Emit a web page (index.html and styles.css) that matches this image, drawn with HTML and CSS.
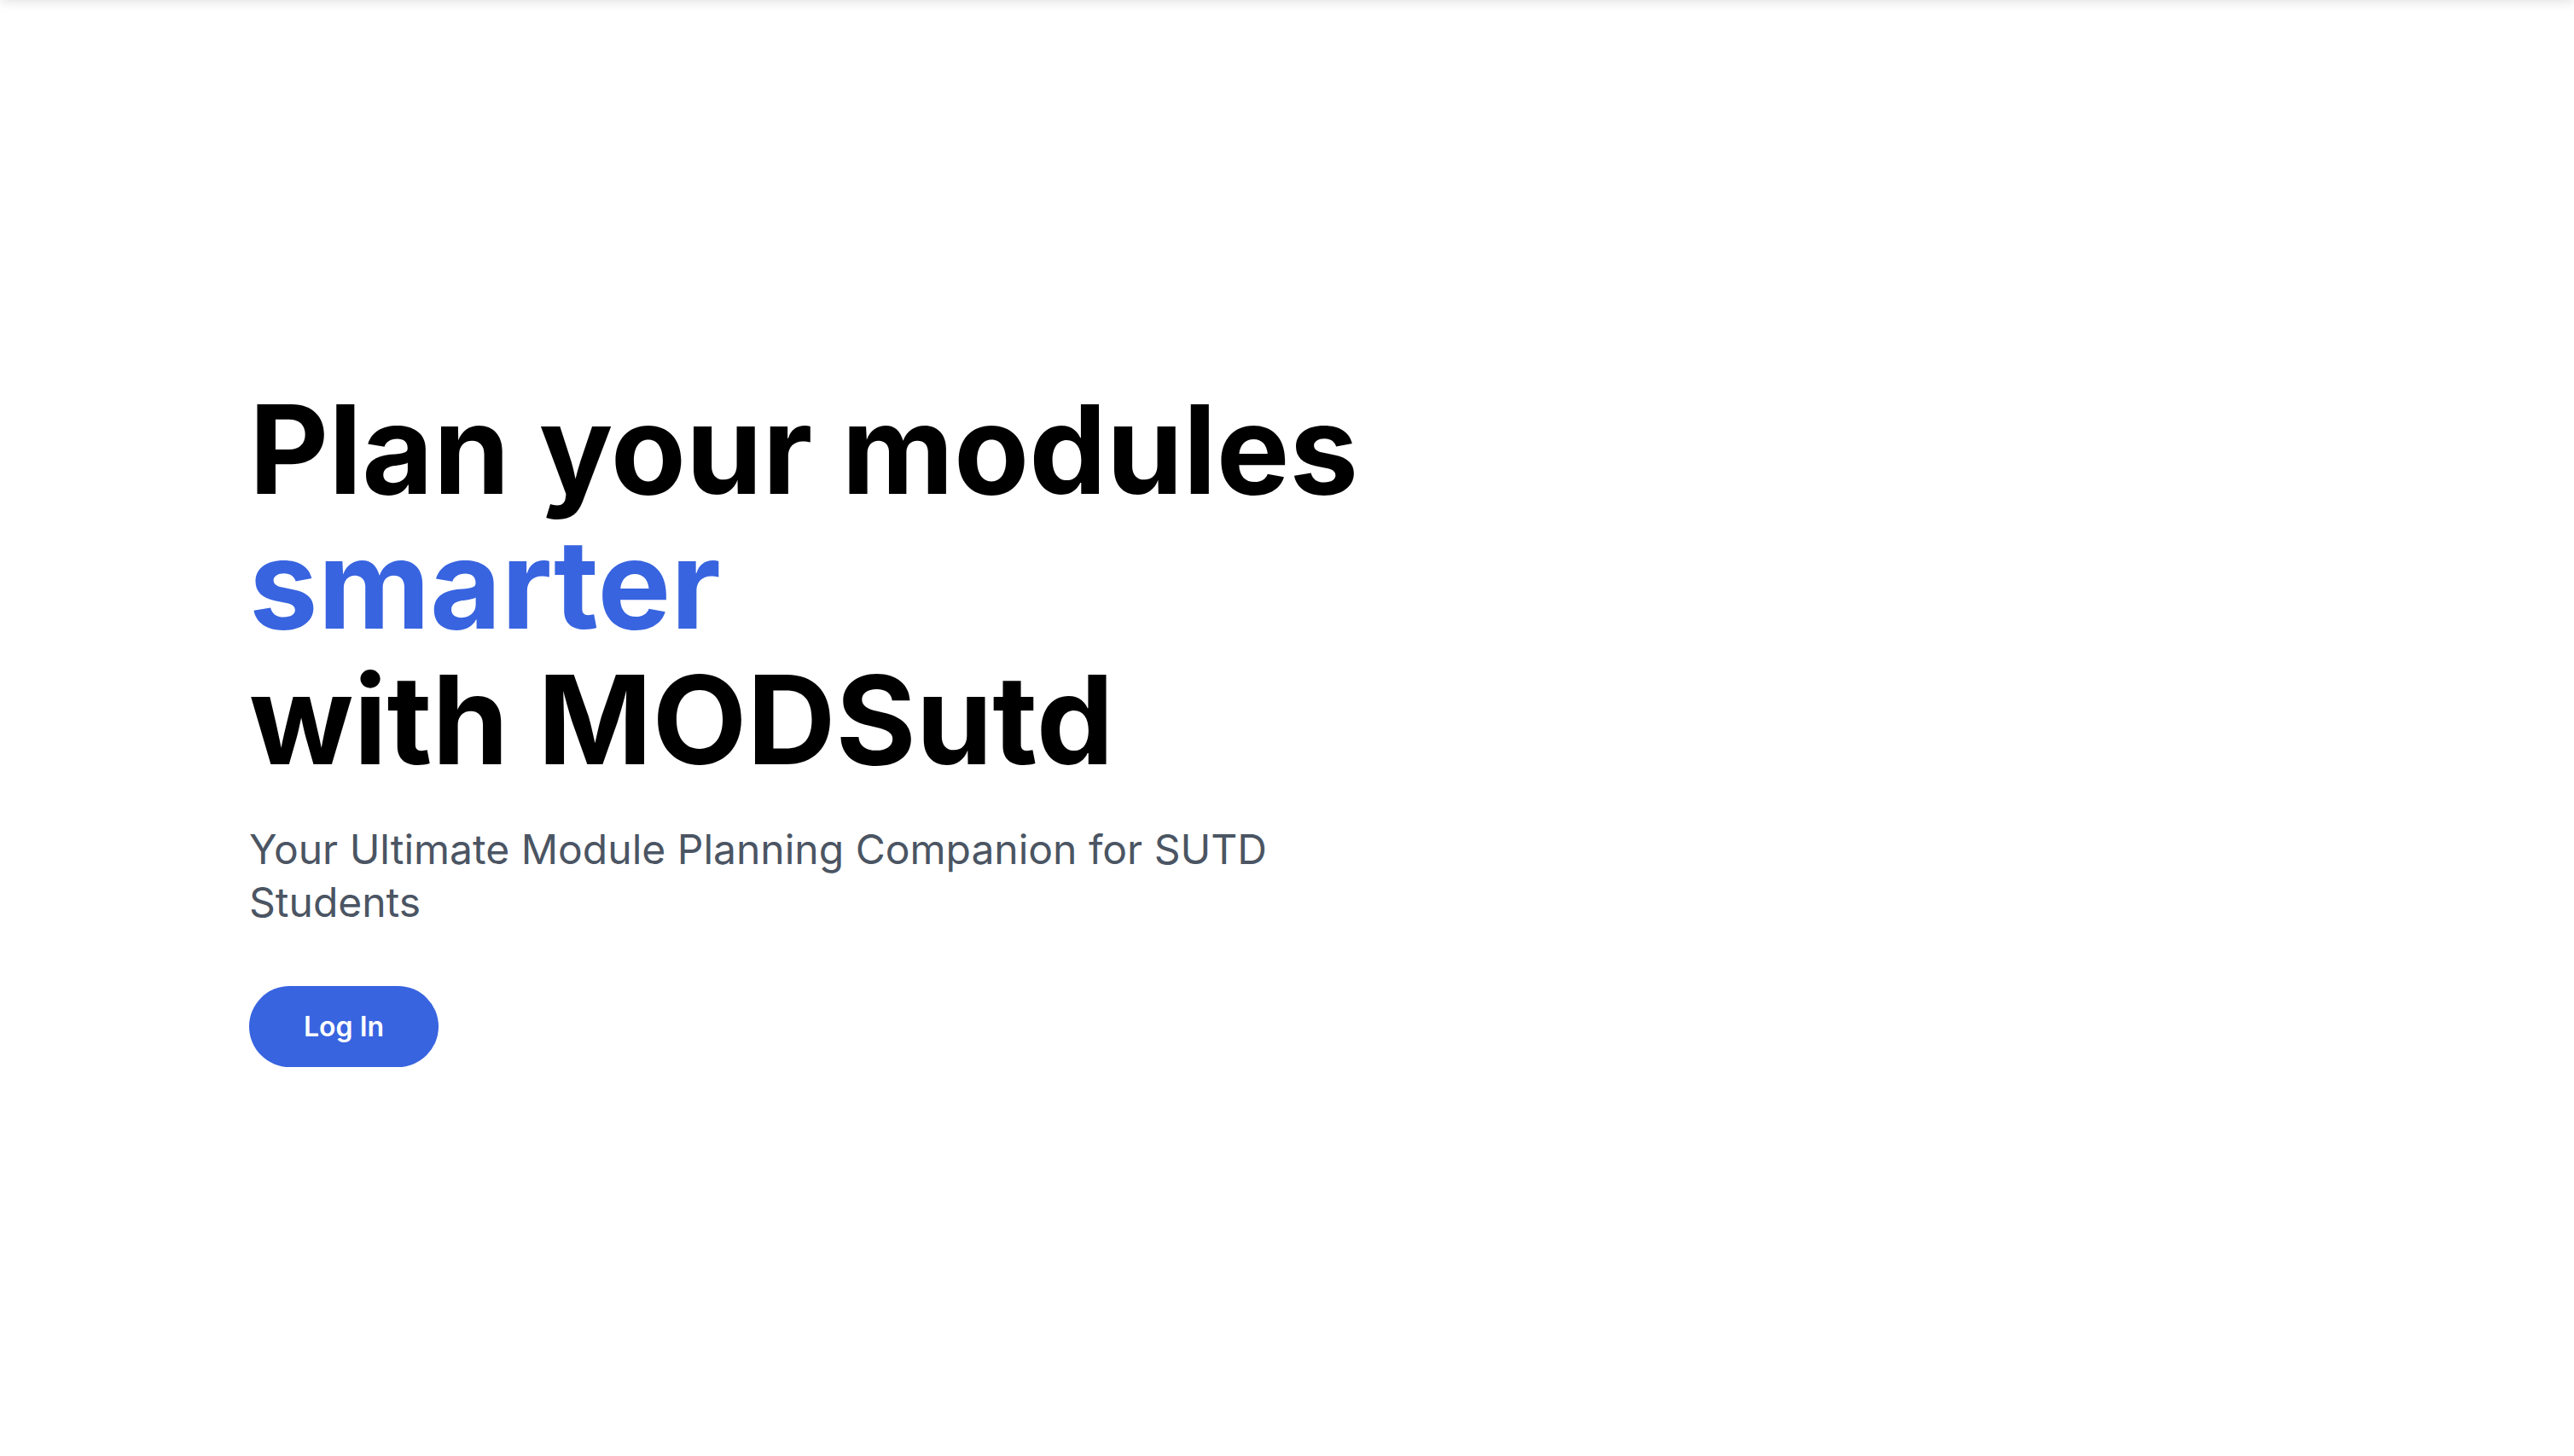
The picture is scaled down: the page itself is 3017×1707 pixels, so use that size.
FILE: index.html
```html
<!DOCTYPE html>
<html lang="en">
<head>
<meta charset="utf-8">
<title>MODSutd</title>
<link rel="stylesheet" href="styles.css">
</head>
<body>
<div class="top-shadow"></div>
<main class="hero">
  <div class="hero-content">
    <h1 class="hero-title">Plan your modules<br><span class="accent">smarter</span><br>with MODSutd</h1>
    <p class="hero-subtitle">Your Ultimate Module Planning Companion for SUTD Students</p>
    <button class="login-btn" type="button">Log In</button>
  </div>
</main>
</body>
</html>
```

FILE: styles.css
```css
* { box-sizing: border-box; }
html, body {
  margin: 0;
  padding: 0;
  height: 100%;
  background: #ffffff;
  font-family: Inter, "Noto Sans", "Liberation Sans", sans-serif;
}
.top-shadow {
  position: fixed;
  top: -20px;
  left: 0;
  right: 0;
  height: 20px;
  box-shadow: 0 2px 14px rgba(0, 0, 0, 0.12);
}
.hero {
  min-height: 100vh;
  display: flex;
  align-items: center;
  padding: 0 0 8px 292px;
}
.hero-content {
  display: flex;
  flex-direction: column;
  align-items: flex-start;
  max-width: 1400px;
}
.hero-title {
  margin: 0;
  font-size: 144px;
  line-height: 1.1;
  font-weight: 700;
  letter-spacing: 0;
  white-space: nowrap;
  color: #000000;
}
.accent { color: #3864e0; }
.hero-subtitle {
  margin: 42px 0 0;
  font-size: 48px;
  line-height: 62px;
  font-weight: 400;
  color: #4b5563;
  max-width: 1250px;
}
.login-btn {
  margin-top: 67px;
  height: 95px;
  padding: 0 64px;
  border: none;
  border-radius: 48px;
  background: #3864e0;
  color: #ffffff;
  font-family: Inter, "Noto Sans", "Liberation Sans", sans-serif;
  font-size: 32px;
  font-weight: 600;
  cursor: pointer;
}
```
